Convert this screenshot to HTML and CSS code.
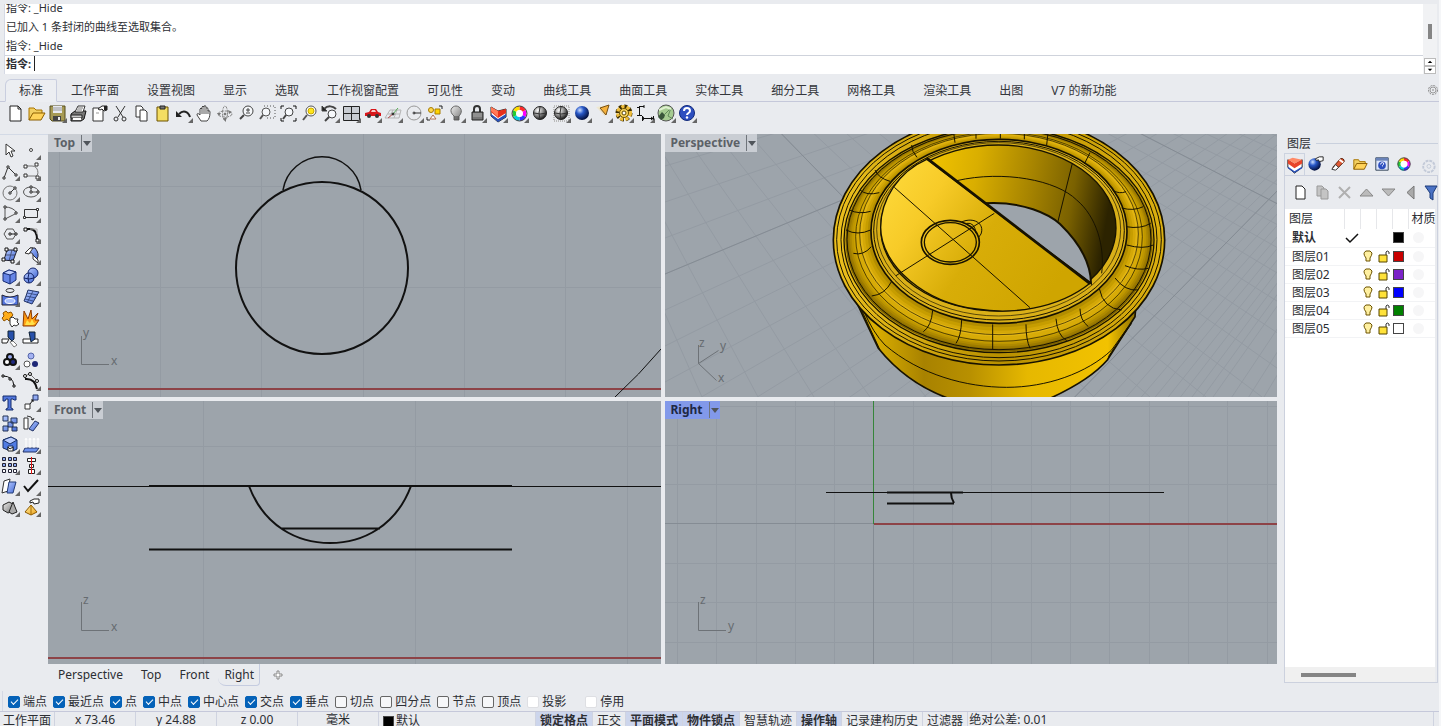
FILE: index.html
```html
<!DOCTYPE html>
<html lang="zh-CN">
<head>
  <meta charset="UTF-8">
  <title>Rhino</title>
  <link rel="stylesheet" href="styles.css">
</head>
<body>

<!-- shared gradients -->
<svg class="defs" aria-hidden="true">
  <defs>
    <radialGradient id="ball" cx=".35" cy=".3" r=".7"><stop offset="0" stop-color="#fff"/><stop offset=".5" stop-color="#999"/><stop offset="1" stop-color="#222"/></radialGradient>
    <radialGradient id="blueBall" cx=".35" cy=".3" r=".7"><stop offset="0" stop-color="#cfe0ff"/><stop offset=".4" stop-color="#2858c8"/><stop offset="1" stop-color="#04103f"/></radialGradient>
    <linearGradient id="blue" x2="1" y2="1"><stop offset="0" stop-color="#b4c9ff"/><stop offset="1" stop-color="#456bd6"/></linearGradient>
    <linearGradient id="gold" x2="1" y2="1"><stop offset="0" stop-color="#fff0a0"/><stop offset="1" stop-color="#eda01a"/></linearGradient>
    <linearGradient id="grey" x2="1" y2="1"><stop offset="0" stop-color="#eee"/><stop offset="1" stop-color="#777"/></linearGradient>
    <linearGradient id="body" x2="1"><stop offset="0" stop-color="#6d5500"/><stop offset=".08" stop-color="#dcb000"/><stop offset=".26" stop-color="#a88200"/><stop offset=".42" stop-color="#b89000"/><stop offset=".62" stop-color="#e6b800"/><stop offset=".9" stop-color="#f2c200"/><stop offset="1" stop-color="#8a6c00"/></linearGradient>
    <linearGradient id="plate" x2="1" y2=".5"><stop offset="0" stop-color="#ffdc3e"/><stop offset=".3" stop-color="#f7cb28"/><stop offset=".6" stop-color="#d8ad08"/><stop offset="1" stop-color="#cfa500"/></linearGradient>
    <linearGradient id="wall" x2="1" y2=".12"><stop offset=".2" stop-color="#f3c500"/><stop offset=".42" stop-color="#d9ae00"/><stop offset=".65" stop-color="#a88500"/><stop offset=".84" stop-color="#7a6100"/><stop offset="1" stop-color="#2c2300"/></linearGradient>
    <linearGradient id="rim" x2="1"><stop offset="0" stop-color="#ecc01e"/><stop offset=".5" stop-color="#b89000"/><stop offset="1" stop-color="#dcb010"/></linearGradient>
  </defs>
</svg>

<section class="command">
  <div class="command-main">
    <div class="history">
      <p>指令: _Hide</p>
      <p>已加入 1 条封闭的曲线至选取集合。</p>
      <p>指令: _Hide</p>
    </div>
    <div class="prompt">
      <label for="cmd">指令:</label>
      <input type="text" id="cmd">
    </div>
  </div>
  <div class="command-side">
    <span class="thumb"></span>
    <div class="spinner">
      <button aria-label="上"><svg viewBox="0 0 8 5"><path d="M1 4L4 1l3 3z"/></svg></button>
      <button aria-label="下"><svg viewBox="0 0 8 5"><path d="M1 1l3 3 3-3z"/></svg></button>
    </div>
  </div>
</section>

<nav class="tabs">
  <button class="tab active">标准</button>
  <button class="tab">工作平面</button>
  <button class="tab">设置视图</button>
  <button class="tab">显示</button>
  <button class="tab">选取</button>
  <button class="tab">工作视窗配置</button>
  <button class="tab">可见性</button>
  <button class="tab">变动</button>
  <button class="tab">曲线工具</button>
  <button class="tab">曲面工具</button>
  <button class="tab">实体工具</button>
  <button class="tab">细分工具</button>
  <button class="tab">网格工具</button>
  <button class="tab">渲染工具</button>
  <button class="tab">出图</button>
  <button class="tab">V7 的新功能</button>
  <button class="options" aria-label="选项"><svg viewBox="0 0 12 12"><circle cx="6" cy="6" r="4.5" fill="none" stroke="#888" stroke-dasharray="2 1"/><circle cx="6" cy="6" r="3" fill="none" stroke="#999"/><circle cx="6" cy="6" r="1" fill="#aaa"/></svg></button>
</nav>

<div class="toolbar">
  <button class="tool" aria-label="新建"><svg viewBox="0 0 21 21"><path d="M5 3h8l3 3v12H5z" fill="#fff" stroke="#222"/><path d="M13 3v3h3" fill="none" stroke="#222"/></svg></button>
  <button class="tool" aria-label="打开"><svg viewBox="0 0 21 21"><path d="M3 17V5h5l2 2h6v3" fill="#f2cf62" stroke="#a87400"/><path d="M3 17l4-7h12l-4 7z" fill="#ffd35a" stroke="#8c5e00"/></svg></button>
  <button class="tool fly" aria-label="保存"><svg viewBox="0 0 21 21"><path d="M3 3h15v15H5l-2-2z" fill="#a69a55" stroke="#554c1c"/><path d="M6 3h9v7H6z" fill="#e8eaf0"/><path d="M6 5h9M6 7h9" stroke="#999"/><path d="M6 13h8v5H6z" fill="#444"/><path d="M11 14h2v3h-2z" fill="#eee"/></svg></button>
  <button class="tool" aria-label="打印"><svg viewBox="0 0 21 21"><path d="M3 11l4-3h11l-2 8-3 2H3z" fill="#777" stroke="#111"/><path d="M7 9l3-6h7l-2 6z" fill="#fff" stroke="#333"/><path d="M10 5h5M9 7h5" stroke="#777"/><path d="M3 12h11v3H3z" fill="#ccc" stroke="#222"/><path d="M5 15h8v2H5z" fill="#fff"/></svg></button>
  <button class="tool" aria-label="文件属性"><svg viewBox="0 0 21 21"><path d="M4 5h10v13H4z" fill="#fff" stroke="#333"/><path d="M9 6l4-3 5 0v4l-3 1-2-2-2 1z" fill="#fff" stroke="#222"/><path d="M15 3h3v4h-3z" fill="#222"/><path d="M7 10h3" stroke="#999"/></svg></button>
  <button class="tool" aria-label="剪切"><svg viewBox="0 0 21 21" fill="none" stroke="#333"><path d="M6 3l7 11M15 3L8 14"/><circle cx="6" cy="16" r="2"/><circle cx="14" cy="16" r="2"/></svg></button>
  <button class="tool" aria-label="复制"><svg viewBox="0 0 21 21" fill="#fff" stroke="#333"><path d="M5 3h5l2 2v9H5z"/><path d="M9 7h5l2 2v9H9z"/></svg></button>
  <button class="tool" aria-label="粘贴"><svg viewBox="0 0 21 21"><path d="M5 4h11v14H5z" fill="#f4dd62" stroke="#6c5300"/><path d="M8 3h5v3H8z" fill="#777" stroke="#222"/></svg></button>
  <button class="tool fly" aria-label="撤销"><svg viewBox="0 0 21 21"><path d="M6 11c4-4 9-3 11 3" fill="none" stroke="#222" stroke-width="2"/><path d="M3 8v6h6z" fill="#222"/></svg></button>
  <button class="tool" aria-label="平移"><svg viewBox="0 0 21 21"><path d="M7 18l-4-6q0-3 3 0V6q1-2 2 0V4q1-2 2 0v-1q2-1 2 1v1q2-1 2 1v2q2-1 2 1c0 5-1 7-3 9z" fill="#fff" stroke="#444"/><path d="M8 6v5M10 4v7M12 5v6M14 7v4" stroke="#555"/></svg></button>
  <button class="tool" aria-label="旋转"><svg viewBox="0 0 21 21" fill="none" stroke="#888"><ellipse cx="10" cy="11" rx="7" ry="3" stroke-dasharray="3 1"/><ellipse cx="10" cy="10" rx="2.500" ry="7" stroke-dasharray="3 1"/><path d="M2 10h4l-2 3zM8 16l3 3v-5zM13 7l4 2-3 2z" fill="#777" stroke="none"/><circle cx="10" cy="11" r="1" fill="#222"/></svg></button>
  <button class="tool" aria-label="缩放"><svg viewBox="0 0 21 21" fill="none" stroke="#444"><circle cx="12" cy="8" r="5" fill="#f6f8fb"/><path d="M8 12l-4 4" stroke-width="2"/><path d="M10 7h4M12 5v4M10 10h4"/></svg></button>
  <button class="tool" aria-label="框选缩放"><svg viewBox="0 0 21 21" fill="none" stroke="#555"><path d="M7 3h11v12H9" stroke-dasharray="1 2"/><circle cx="9" cy="9" r="4" fill="#f6f8fb"/><path d="M6 12l-3 4" stroke-width="2"/></svg></button>
  <button class="tool" aria-label="缩放至最大"><svg viewBox="0 0 21 21" fill="none" stroke="#444"><circle cx="11" cy="9" r="4" fill="#f6f8fb"/><path d="M8 12l-3 4" stroke-width="2"/><path d="M3 6V3h3M15 3h3v3M18 15v3h-3M3 15v3h3" stroke="#111"/></svg></button>
  <button class="tool" aria-label="缩放选取"><svg viewBox="0 0 21 21" stroke="#555"><circle cx="12" cy="8" r="5" fill="#fff"/><circle cx="12" cy="8" r="3" fill="#ffe61a" stroke="#c9a800"/><path d="M8 12l-4 5" stroke-width="2"/></svg></button>
  <button class="tool fly" aria-label="恢复视图"><svg viewBox="0 0 21 21" fill="none" stroke="#444"><path d="M4 6c4-4 9-3 12 0" stroke-width="2"/><path d="M2 3v5h5z" fill="#222"/><circle cx="12" cy="11" r="4" fill="#f6f8fb"/><path d="M9 14l-4 4" stroke-width="2"/></svg></button>
  <button class="tool fly" aria-label="四个视窗"><svg viewBox="0 0 21 21"><path d="M2.500 3.500h16v14h-16z" fill="#c8ccd2" stroke="#222"/><path d="M10.500 3v15M3 10.500h15" stroke="#222"/></svg></button>
  <button class="tool fly" aria-label="右视图"><svg viewBox="0 0 21 21"><path d="M3 10l4-1 2-3h5l2 3 3 1v3H3z" fill="#d8161a"/><path d="M9 9l1-2h3l1 2z" fill="#f6c8c8"/><circle cx="7" cy="13" r="2" fill="#333"/><circle cx="15" cy="13" r="2" fill="#333"/></svg></button>
  <button class="tool fly" aria-label="工作平面"><svg viewBox="0 0 21 21" fill="none" stroke="#b5b5b5"><path d="M2 15l5-8h11l-2 8zM5 11h12M10 7l-4 8M14 7l-3 8"/><path d="M10 11l-5 4" stroke="#b55"/><path d="M10 11l5-6" stroke="#5a5"/><circle cx="10" cy="11" r="1" stroke="#111"/></svg></button>
  <button class="tool fly" aria-label="圆心"><svg viewBox="0 0 21 21" fill="none" stroke="#999"><circle cx="10" cy="10" r="7"/><path d="M10 10h7" stroke="#333"/><circle cx="10" cy="10" r="1" stroke="#333"/></svg></button>
  <button class="tool fly" aria-label="选取"><svg viewBox="0 0 21 21"><circle cx="6" cy="7" r="2.500" fill="#ffd84d" stroke="#a87c00"/><path d="M10 6h5v5h-5z" fill="#ffd400" stroke="#a87c00"/><path d="M5 16l3-4 3 4z" fill="#fff" stroke="#b07050"/><path d="M14 3h3v3M2 14v3h3" fill="none" stroke="#222"/></svg></button>
  <button class="tool fly" aria-label="隐藏"><svg viewBox="0 0 21 21"><path d="M8 13C2 8 6 3 10 3s8 5 3 10v4H8z" fill="url(#grey)" stroke="#666"/><path d="M8 14h5M8 16h5" stroke="#444"/></svg></button>
  <button class="tool fly" aria-label="锁定"><svg viewBox="0 0 21 21"><path d="M7 9V6q0-3 3-3t3 3v3" fill="none" stroke="#333" stroke-width="2"/><path d="M5 9h11v8H5z" fill="#777" stroke="#222"/><path d="M6 11h9M6 13h9" stroke="#aaa"/></svg></button>
  <button class="tool fly" aria-label="图层"><svg viewBox="0 0 21 21"><path d="M3 4l7 4 8-2v8l-8 5-7-6z" fill="#fff" stroke="#222"/><path d="M3 11l7 5 8-5v3l-8 5-7-6z" fill="#2850b8"/><path d="M3 4l7 4 8-2v4l-8 5-7-6z" fill="#e8301c"/><path d="M3 4l7 4v6L3 8z" fill="#ff7a58"/></svg></button>
  <button class="tool fly" aria-label="颜色"><svg viewBox="0 0 21 21" fill="none" stroke-width="4"><path d="M10.500 5A5.500 5.500 0 0 1 15 8" stroke="#ff2b2b"/><path d="M15 8a5.500 5.500 0 0 1 0 5" stroke="#f0f"/><path d="M15 13a5.500 5.500 0 0 1-4.500 3" stroke="#33f"/><path d="M10.500 16A5.500 5.500 0 0 1 6 13" stroke="#0cd"/><path d="M6 13a5.500 5.500 0 0 1 0-5" stroke="#2c3"/><path d="M6 8a5.500 5.500 0 0 1 4.500-3" stroke="#fd0"/><circle cx="10.500" cy="10.500" r="3.500" fill="#fff" stroke="none"/><circle cx="10.500" cy="10.500" r="7.500" stroke="#444" stroke-width="1"/></svg></button>
  <button class="tool" aria-label="着色"><svg viewBox="0 0 21 21"><circle cx="10" cy="10" r="6.500" fill="url(#ball)" stroke="#222"/><path d="M4 10q6 2 13 0M10 4q-2 6 0 13" fill="none" stroke="#333"/></svg></button>
  <button class="tool fly" aria-label="着色模式"><svg viewBox="0 0 21 21"><path d="M3 3h15v15H3z" fill="none" stroke="#bbb" stroke-width="2" stroke-dasharray="1 1"/><circle cx="10" cy="10" r="6.500" fill="url(#ball)" stroke="#222"/><path d="M4 10q6 2 13 0M10 4q-2 6 0 13" fill="none" stroke="#333"/></svg></button>
  <button class="tool fly" aria-label="渲染"><svg viewBox="0 0 21 21"><circle cx="10" cy="10" r="7" fill="url(#blueBall)"/></svg></button>
  <button class="tool fly" aria-label="灯光"><svg viewBox="0 0 21 21"><path d="M3 4l12-2-3 11z" fill="url(#gold)" opacity=".3"/><path d="M7 5l9-3-3 10z" fill="#f5b13c" stroke="#775014"/></svg></button>
  <button class="tool fly" aria-label="设置"><svg viewBox="0 0 21 21"><circle cx="10" cy="10" r="6.500" fill="none" stroke="#3d2e00" stroke-width="4" stroke-dasharray="3 2"/><circle cx="10" cy="10" r="6" fill="none" stroke="#efbd3a" stroke-width="4" stroke-dasharray="3 2"/><circle cx="10" cy="10" r="4.500" fill="#f8d35c" stroke="#6c5200"/><circle cx="10" cy="10" r="2" fill="#fff" stroke="#5b4600"/></svg></button>
  <button class="tool fly" aria-label="标注"><svg viewBox="0 0 21 21" fill="none" stroke="#111"><path d="M4.500 4v9M2 4.500h3M4 3.500h5M2 12.500h5M7 15.500h11M7.500 13v5M18.500 13v5"/><path d="M9 2v3M9 14l-2 1.500L9 17M16 14l2 1.500-2 1.500"/></svg></button>
  <button class="tool fly" aria-label="草蜢"><svg viewBox="0 0 21 21"><circle cx="10" cy="10" r="8" fill="#a5cb91" stroke="#555"/><path d="M2 14l4-5 3 3-1 3-3 2z" fill="#39563a"/><path d="M8 12l7-7-3 8 5 3" fill="none" stroke="#5f8a58"/><path d="M3 7l7-3 5 2" fill="none" stroke="#dff0d0" stroke-width="2"/></svg></button>
  <button class="tool fly" aria-label="说明"><svg viewBox="0 0 21 21"><circle cx="10" cy="10" r="7.500" fill="#2d4fc0" stroke="#122a7a"/><path d="M7 8c0-4 6-4 6 0 0 2-3 2-3 4" fill="none" stroke="#fff" stroke-width="2"/><circle cx="10" cy="14.500" r="1.200" fill="#fff"/></svg></button>
</div>

<main class="workspace">
  <aside class="tools">
    <button class="tool" aria-label="选取"><svg viewBox="0 0 21 21"><path d="M6 4v11l3-3 2 5 2-1-2-5h4z" fill="#fff" stroke="#333"/></svg></button>
    <button class="tool fly" aria-label="点"><svg viewBox="0 0 21 21"><circle cx="10" cy="10" r="1.500" fill="#fff" stroke="#444"/></svg></button>
    <button class="tool fly" aria-label="多重直线"><svg viewBox="0 0 21 21" fill="#fff" stroke="#333"><path d="M4 17L8 6l8 8" fill="none"/><path d="M3 16h2v2H3zM7 5h2v2H7zM15 13h2v2h-2z"/></svg></button>
    <button class="tool fly" aria-label="曲线"><svg viewBox="0 0 21 21" fill="#fff" stroke="#333"><path d="M5 5h6c7 0 7 10 4 10H5" fill="none" stroke="#777"/><path d="M3 4h3v3H3zM14 2h3v3h-3zM3 13h3v3H3zM15 15h3v3h-3z"/></svg></button>
    <button class="tool fly" aria-label="圆"><svg viewBox="0 0 21 21" fill="none" stroke="#777"><circle cx="10" cy="11" r="7"/><path d="M10 11l5-5" stroke="#333"/><path d="M9 10h2v2H9zM14 5h2v2h-2z" fill="#fff" stroke="#333"/></svg></button>
    <button class="tool fly" aria-label="椭圆"><svg viewBox="0 0 21 21" fill="none" stroke="#555"><ellipse cx="10" cy="10" rx="7.500" ry="5"/><path d="M10 10V5M10 10h7"/><path d="M9 9h2v2H9zM9 4h2v2H9zM16 9h2v2h-2z" fill="#fff" stroke="#333"/></svg></button>
    <button class="tool fly" aria-label="圆弧"><svg viewBox="0 0 21 21" fill="none" stroke="#555"><path d="M5 4q8 0 12 6M5 4v12l12-6"/><path d="M4 3h2v2H4zM4 15h2v2H4zM15 9h2v2h-2z" fill="#fff" stroke="#333"/></svg></button>
    <button class="tool fly" aria-label="矩形"><svg viewBox="0 0 21 21" fill="none" stroke="#333"><path d="M3.500 6.500h13v8h-13z"/><path d="M15.500 5.500h2v2h-2zM2.500 13.500h2v2h-2z" fill="#fff"/></svg></button>
    <button class="tool fly" aria-label="多边形"><svg viewBox="0 0 21 21" fill="none" stroke="#555"><path d="M4 10l3-5h6l3 5-3 5H7z"/><path d="M10 10h6" stroke="#222"/><path d="M9 9h2v2H9zM15 9h2v2h-2z" fill="#fff" stroke="#222"/></svg></button>
    <button class="tool fly" aria-label="圆角"><svg viewBox="0 0 21 21" fill="none" stroke="#111"><path d="M4 5h5q7 0 7 11" stroke-width="2"/><path d="M9 5h7v5" stroke="#aaa"/><path d="M3 4h3v3H3zM15 15h3v3h-3z" fill="#fff"/></svg></button>
    <button class="tool fly" aria-label="曲面"><svg viewBox="0 0 21 21"><path d="M7 5h10l-4 11-9-1z" fill="url(#blue)" stroke="#223"/><path d="M5 10h10M12 5l-3 11" stroke="#223" opacity=".6"/><path d="M5 3h3v3H5zM14 3h3v3h-3zM2 13h3v3H2zM11 15h3v3h-3z" fill="#fff" stroke="#111"/></svg></button>
    <button class="tool fly" aria-label="曲面圆角"><svg viewBox="0 0 21 21"><path d="M9 3h5q5 6 2 11l-4-4q0-3-6-2z" fill="url(#blue)" stroke="#223"/><path d="M9 3L4 8l4 1 4-6zM12 10l5 5v3l-5-4z" fill="#fff" stroke="#333"/></svg></button>
    <button class="tool fly" aria-label="立方体"><svg viewBox="0 0 21 21"><path d="M3 7l6-3 7 2v8l-6 4-7-3z" fill="#6685e6" stroke="#162c74"/><path d="M3 7l6-3 7 2-6 3z" fill="#c0d0ff" stroke="#162c74"/><path d="M10 9v9" stroke="#162c74"/></svg></button>
    <button class="tool fly" aria-label="布尔"><svg viewBox="0 0 21 21"><circle cx="12" cy="7" r="5" fill="url(#blue)" stroke="#112266"/><circle cx="8" cy="12" r="5" fill="url(#blue)" stroke="#112266"/><path d="M3 12q5 2 10 0M8 7q-2 5 0 10" fill="none" stroke="#112266"/></svg></button>
    <button class="tool fly" aria-label="抽离曲线"><svg viewBox="0 0 21 21"><ellipse cx="10" cy="3.500" rx="4" ry="2" fill="none" stroke="#333"/><path d="M2 8q8 4 16 0v10H2z" fill="#5476df" stroke="#223"/><ellipse cx="10" cy="14" rx="5" ry="2.500" fill="#a9c0ff" stroke="#fff"/></svg></button>
    <button class="tool fly" aria-label="网格"><svg viewBox="0 0 21 21"><path d="M7 3l11 2-3 5-4 7-8-3 2-5z" fill="url(#blue)" stroke="#223366"/><path d="M12 4l-6 12M5 9l10 2M4 12l8 2M6 6l11 2" fill="none" stroke="#223366" opacity=".7"/></svg></button>
    <button class="tool" aria-label="群组"><svg viewBox="0 0 21 21"><path d="M3 5l3-2 2 2 3-1 2 3-2 2 1 3-3 1-2-2-3 2-2-3 2-2z" fill="#ffad19" stroke="#915300"/><path d="M10 10l3-1 2 2 3 0-1 3 2 2-3 2-2-1-2 2-2-3z" fill="#fff" stroke="#333"/></svg></button>
    <button class="tool" aria-label="炸开"><svg viewBox="0 0 21 21"><path d="M2 18l1-15 4 8 3-9 1 9 6-6-3 7 4 0-4 6z" fill="#ff9c12" stroke="#8d3b00"/><path d="M4 17l2-5 3 3 2-4 2 4 3-1-4 3z" fill="#ffe14a"/></svg></button>
    <button class="tool" aria-label="修剪"><svg viewBox="0 0 21 21"><path d="M8 2h6v8l-2 2-4-4z" fill="#2750aa" stroke="#123"/><path d="M2 10h7l-2 4H2z" fill="#fff" stroke="#222"/><path d="M10 13l3-1 4 4-3 2z" fill="#fff" stroke="#777"/></svg></button>
    <button class="tool" aria-label="分割"><svg viewBox="0 0 21 21"><path d="M2 10h15v4H2z" fill="#fff" stroke="#222"/><path d="M8 3h6v7l-4 3z" fill="#2750aa" stroke="#123"/></svg></button>
    <button class="tool fly" aria-label="组合"><svg viewBox="0 0 21 21" stroke="#111" stroke-width="2"><circle cx="10" cy="7" r="3" fill="#98a8ee"/><circle cx="7" cy="12" r="3" fill="#fff"/><circle cx="13" cy="12" r="3" fill="#202a80"/></svg></button>
    <button class="tool" aria-label="解组"><svg viewBox="0 0 21 21"><circle cx="10" cy="6" r="3" fill="#a4b2f2" stroke="#5566aa"/><circle cx="6" cy="14" r="3" fill="#fff" stroke="#555"/><circle cx="14" cy="14" r="3" fill="#1d2776"/></svg></button>
    <button class="tool" aria-label="编辑点"><svg viewBox="0 0 21 21" fill="none" stroke="#111"><path d="M3 5q10 0 11 10"/><path d="M2 4h2v2H2zM9 7h2v2H9zM13 14h2v2h-2z" fill="#fff"/></svg></button>
    <button class="tool fly" aria-label="控制点"><svg viewBox="0 0 21 21" fill="none" stroke="#111"><path d="M4 8q10-1 12 10" stroke-width="2"/><path d="M3 5l6-2 8 8" stroke="#777"/><circle cx="4" cy="5" r="1.500" fill="#fff"/><circle cx="9" cy="3" r="1.500" fill="#fff"/><circle cx="16" cy="10" r="1.500" fill="#fff"/></svg></button>
    <button class="tool" aria-label="文字"><svg viewBox="0 0 21 21"><path d="M3 4h13v4h-2l-1-1h-2v9l2 1v1H6v-1l2-1V7H6L5 9H3z" fill="#5277dc" stroke="#152d6c"/></svg></button>
    <button class="tool fly" aria-label="移动"><svg viewBox="0 0 21 21"><path d="M12 3h5v5h-5z" fill="#91aaf2" stroke="#223366"/><path d="M4 12h5v5H4z" fill="#fff" stroke="#333"/><path d="M9 12l3-4M10 8h2v2" fill="none" stroke="#111"/></svg></button>
    <button class="tool" aria-label="阵列"><svg viewBox="0 0 21 21" fill="url(#blue)" stroke="#223355"><path d="M3 3h5v5H3zM11 5h6v5h-6zM8 9h5v5H8zM3 13h5v5H3zM12 14h5v4h-5z"/></svg></button>
    <button class="tool" aria-label="旋转"><svg viewBox="0 0 21 21"><path d="M3 5h4v11H3z" fill="#fff" stroke="#333"/><path d="M8 16l6-8 4 2-6 8z" fill="url(#blue)" stroke="#223366"/><path d="M6 3q5 0 6 4M12 7l-2-1M12 7l1-2" fill="none" stroke="#333"/></svg></button>
    <button class="tool fly" aria-label="实体编辑"><svg viewBox="0 0 21 21"><path d="M3 6l8-3 6 3v9l-4 2v-5H8v4l-5-2z" fill="#507be3" stroke="#173064"/><path d="M3 6l8-3 6 3-7 4z" fill="#b9ccff" stroke="#173064"/><path d="M8 13l2 2 3-2v4H8z" fill="#fff" stroke="#222"/></svg></button>
    <button class="tool fly" aria-label="投影"><svg viewBox="0 0 21 21"><path d="M4 14h14l-3 4H2z" fill="#6c91ed" stroke="#223366"/><path d="M5 5v9M9 5v9M13 5v9M17 5v9M4 6l1-2 1 2M8 6l1-2 1 2M12 6l1-2 1 2M16 6l1-2 1 2" stroke="#fff" fill="none"/></svg></button>
    <button class="tool fly" aria-label="矩形阵列"><svg viewBox="0 0 21 21" fill="#8ca9f2" stroke="#223"><path d="M2.500 2.500h3v3h-3zM8.500 2.500h3v3h-3zM13.500 2.500h3v3h-3zM2.500 8.500h3v3h-3zM8.500 8.500h3v3h-3zM13.500 8.500h3v3h-3z"/><path d="M2.500 14.500h3v3h-3zM8.500 14.500h3v3h-3zM13.500 14.500h3v3h-3z" fill="#fff"/></svg></button>
    <button class="tool fly" aria-label="对齐"><svg viewBox="0 0 21 21" fill="#fff" stroke="#222"><path d="M6.500 3.500h8v3h-8zM8.500 9.500h4v3h-4zM7.500 14.500h6v4h-6z"/><path d="M10.500 2v17" stroke="#e01010"/></svg></button>
    <button class="tool fly" aria-label="检查"><svg viewBox="0 0 21 21"><path d="M4 5l6-2-2 12-6 2z" fill="#fff" stroke="#333"/><path d="M9 6h7l-3 11H7z" fill="url(#blue)" stroke="#233c77"/></svg></button>
    <button class="tool fly" aria-label="完成"><svg viewBox="0 0 21 21"><path d="M3 10l4 5L17 4" fill="none" stroke="#111" stroke-width="2"/></svg></button>
    <button class="tool fly" aria-label="基础几何"><svg viewBox="0 0 21 21"><path d="M3 8l6-3 4 2v7l-5 2-5-3z" fill="url(#grey)" stroke="#222"/><path d="M13 5l4 10-5 2-3-2z" fill="#aaa" stroke="#222"/></svg></button>
    <button class="tool fly" aria-label="拖曳"><svg viewBox="0 0 21 21"><path d="M10 8l6 7-6 3-6-3z" fill="url(#gold)" stroke="#8a5800"/><path d="M10 8v10" stroke="#a66d00"/><path d="M9 4l4-2h5v4l-5 1-1-2-3 1z" fill="#fff" stroke="#222"/></svg></button>
  </aside>

  <div class="center">
    <div class="viewports">
      <section class="viewport">
        <button class="view-title"><span>Top</span></button>
        <svg class="scene" viewBox="0 0 613 263" preserveAspectRatio="xMinYMin slice">
          <path class="grid" d="M0 52.500h613M0 153.500h613M11.500 0v263M112.500 0v263M213.500 0v263M315.500 0v263M416.500 0v263M517.500 0v263"/>
          <path class="red" d="M0 255h613"/>
          <circle class="curve" cx="274" cy="134" r="86"/>
          <path class="curve bump" d="M235 56A39.500 39.500 0 0 1 313 56"/>
          <path class="curve thin" d="M567 263q24-22 46-48"/>
          <path class="axis" d="M33.500 202v28.500H61"/>
          <text x="35" y="203">y</text><text x="63" y="231">x</text>
        </svg>
      </section>

      <section class="viewport">
        <button class="view-title"><span>Perspective</span></button>
        <svg class="scene" viewBox="0 0 613 263" preserveAspectRatio="xMinYMin slice">
          <path class="grid" d="M-243-369L37 263M-243-369L93 263M-243-369L149 263M-243-369L205 263M-243-369L261 263M-243-369L317 263M-243-369L373 263M-243-369L429 263M-243-369L485 263M-243-369L541 263M-243-369L597 263M-243-369L653 263M-243-369L709 263M-243-369L765 263M-243-369L821 263M-243-369L877 263M-243-369L933 263M-243-369L989 263M-243-369L1045 263M-243-369L1101 263M-243-369L1157 263M-243-369L1213 263"/>
          <path class="grid" d="M900-236L0-4M900-236L0 32M900-236L0 68M900-236L0 104M900-236L0 140M900-236L0 176M900-236L0 212M900-236L0 248M900-236L0 284M900-236L0 320M900-236L0 356M900-236L0 392M900-236L0 428M900-236L0 464M900-236L0 500M900-236L0 536M900-236L0 572M900-236L0 608M900-236L0 644M900-236L0 680M900-236L0 716M900-236L0 752M900-236L0 788M900-236L0 824M900-236L0 860M900-236L0 896M900-236L0 932M900-236L0 968M900-236L0 1004M900-236L0 1040M900-236L0 1112M900-236L0 1184M900-236L0 1256"/>
          <path class="grid major" d="M-243-369L373 263M-243-369L989 263M900-236L0 140M900-236L0 680"/>
          <!-- ring model, drawn at three times its size -->
          <g transform="translate(145 -4) scale(.333333)" fill="none" stroke="#171200" stroke-width="3">
            <path d="M118 470L160 560L205 655Q290 760 415 805H720Q840 750 892 690L975 560L980 500z" fill="url(#body)" stroke-width="5"/>
            <path d="M160 540Q190 610 225 645C330 735 470 772 590 772S830 730 905 660L955 590M150 530l60 130M965 580l-70 100"/>
            <ellipse cx="567" cy="330" rx="497" ry="375" fill="url(#rim)" stroke-width="5"/>
            <ellipse cx="567" cy="329" rx="487" ry="364"/>
            <ellipse cx="567" cy="329" rx="474" ry="354" fill="url(#rim)"/>
            <g stroke="none">
              <ellipse cx="567" cy="330" rx="461" ry="335" fill="#7c6100"/>
              <ellipse cx="567" cy="328" rx="457" ry="332" fill="#8c6e00"/>
              <ellipse cx="567" cy="327" rx="452" ry="328" fill="#9d7b00"/>
              <ellipse cx="567" cy="325" rx="447" ry="324" fill="#ae8900"/>
              <ellipse cx="567" cy="323" rx="442" ry="320" fill="#bd9600"/>
              <ellipse cx="567" cy="322" rx="436" ry="316" fill="#caa000"/>
              <ellipse cx="567" cy="320" rx="430" ry="311" fill="#d7ab08"/>
              <ellipse cx="567" cy="316" rx="419" ry="303" fill="#e2b512"/>
              <ellipse cx="567" cy="313" rx="410" ry="297" fill="#d4a808"/>
              <ellipse cx="567" cy="311" rx="402" ry="291" fill="#c69d00"/>
              <ellipse cx="567" cy="308" rx="394" ry="284" fill="#b38d00"/>
            </g>
            <ellipse cx="567" cy="330" rx="465" ry="338" stroke-width="4"/>
            <ellipse cx="567" cy="328" rx="456" ry="331"/>
            <ellipse cx="567" cy="320" rx="430" ry="314" stroke-width="2"/>
            <ellipse cx="567" cy="312" rx="418" ry="302" stroke-width="2"/>
            <ellipse cx="567" cy="304" rx="384" ry="276" fill="#d9af18" stroke-width="5"/>
            <ellipse cx="567" cy="302" rx="376" ry="268"/>
            <ellipse cx="566" cy="298" rx="366" ry="260" fill="#dab018" stroke-width="2"/>
            <ellipse cx="565" cy="294" rx="353" ry="249" fill="url(#wall)" stroke-width="4"/>
            <path d="M440 152C580 120 740 150 800 210C860 260 885 350 875 430M787 100L743 278"/>
            <path d="M522 220C640 212 720 255 750 282C810 340 842 400 843 460z" fill="#9da4ab" stroke-width="6"/>
            <path d="M350 88L840 460C740 540 600 553 500 537C350 520 212 410 212 292C212 210 265 125 350 88z" fill="url(#plate)" stroke-width="4"/>
            <path d="M350 84L840 461" stroke-width="8"/>
            <path d="M253 172L660 533M258 437L553 250"/>
            <ellipse cx="421" cy="337" rx="87" ry="66" stroke-width="5"/>
            <ellipse cx="421" cy="337" rx="78" ry="59" stroke-width="4"/>
            <path d="M455 276C490 260 525 280 513 312L506 322M470 280q24-4 28 30"/>
            <path d="M108 300q35 18 74 0M118 240q30 14 64 4M150 180q20 18 58 8M195 120q10 24 45 34M305 45q0 20 16 37M430 0l5 38M498 0v26M571 0v26M643 0v28M715 0l-5 45M840 68l-17 34M948 185q-20 8-40-4M1000 230q-30 14-65 4M1022 280q-30 18-74 10M1030 345q-30 14-80 0M1015 415q-30 8-70-8M985 480q-40 4-70-36M935 540q-55-4-67-64M835 590q-25-20-25-54M770 632q-28-16-32-66M660 655q-12-26-12-72M548 658v-75M438 640q15-20 17-70M340 605q24-16 28-64M185 498q40-4 60-44M130 370q30 8 54-20"/>
          </g>
          <path class="axis" d="M33.500 211v18.500l20-13M33.500 229.500l18 17"/>
          <text x="34" y="213">z</text><text x="55" y="216">y</text><text x="53" y="248">x</text>
        </svg>
      </section>

      <section class="viewport">
        <button class="view-title"><span>Front</span></button>
        <svg class="scene" viewBox="0 0 613 263" preserveAspectRatio="xMinYMin slice">
          <path class="grid" d="M0 45.500h613M155.500 0v263M367.500 0v263M579.500 0v263"/>
          <path class="red" d="M0 257h613"/>
          <path class="curve thin" d="M0 85.500h613"/>
          <path class="curve" d="M101 85h363M101 148.500h363M233 127.500h99M201 85C216 125 249 142 282 142S348 125 363 85"/>
          <path class="axis" d="M33.500 201v28.500H61"/>
          <text x="35" y="203">z</text><text x="63" y="230">x</text>
        </svg>
      </section>

      <section class="viewport active">
        <button class="view-title"><span>Right</span></button>
        <svg class="scene" viewBox="0 0 613 263" preserveAspectRatio="xMinYMin slice">
          <path class="grid" d="M0 5.500h613M0 44.500h613M0 83.500h613M0 162.500h613M0 201.500h613M0 241.500h613M12.500 0v263M51.500 0v263M91.500 0v263M130.500 0v263M169.500 0v263M248.500 0v263M287.500 0v263M326.500 0v263M366.500 0v263M405.500 0v263M444.500 0v263M484.500 0v263M523.500 0v263M562.500 0v263M602.500 0v263"/>
          <path class="grid major" d="M208.500 123v140M0 122.500h209"/>
          <path class="green" d="M208.500 0v123"/>
          <path class="red" d="M209 123h404"/>
          <path class="curve thin" d="M161 91.500h338"/>
          <path class="curve" d="M222 91.500h76M222 102.500h67M286 92q0 5 3 10"/>
          <path class="axis" d="M33.500 201v28.500H61"/>
          <text x="35" y="203">z</text><text x="63" y="229">y</text>
        </svg>
      </section>
    </div>

    <nav class="view-tabs">
      <button>Perspective</button>
      <button>Top</button>
      <button>Front</button>
      <button class="active">Right</button>
      <button class="add" aria-label="新增"><svg viewBox="0 0 10 10"><path d="M4 1h2v3h3v2H6v3H4V6H1V4h3z" fill="#fff" stroke="#888"/></svg></button>
    </nav>
  </div>

  <aside class="panel">
    <h2>图层</h2>
    <div class="panel-tabs">
      <button class="active" aria-label="图层"><svg viewBox="0 0 21 21"><path d="M3 5l7 5 8-5v8l-8 6-7-6z" fill="#fff" stroke="#222"/><path d="M3 12l7 5 8-5v2l-8 5-7-5z" fill="#2850b8"/><path d="M3 5l7 4 8-4v4l-8 5-7-5z" fill="#e8442a"/><path d="M3 5l5-2 10 2-8 4z" fill="#ff8a68"/></svg></button>
      <button aria-label="渲染"><svg viewBox="0 0 21 21"><circle cx="9" cy="11" r="6.500" fill="url(#blueBall)"/><path d="M10 5l4-2h4v4l-4 1-1-2-2 1z" fill="#fff" stroke="#222"/></svg></button>
      <button aria-label="材质"><svg viewBox="0 0 21 21"><path d="M5 14l8-9q4-1 4 3l-8 8z" fill="#e05a36" stroke="#541800"/><path d="M8 11l3 3-3 3-4-1z" fill="#fff" stroke="#333"/><path d="M12 6l4 3" stroke="#fff" stroke-width="2"/></svg></button>
      <button aria-label="图库"><svg viewBox="0 0 21 21"><path d="M4 16V6h5l1 2h6v3" fill="#f2cf62" stroke="#a87400"/><path d="M4 16l3-6h11l-3 6z" fill="#ffd35a" stroke="#8c5e00"/></svg></button>
      <button aria-label="说明"><svg viewBox="0 0 21 21"><path d="M4 4h13v13H4z" fill="#dce5fb" stroke="#345"/><path d="M4 4h13v3H4z" fill="#6a83b8"/><circle cx="10.500" cy="12" r="4" fill="#2d4fc0"/><path d="M9 11q0-2 2-2t1 2l-1 1v1" fill="none" stroke="#fff"/></svg></button>
      <button aria-label="颜色"><svg viewBox="0 0 21 21" fill="none" stroke-width="3"><path d="M10.500 5.500A5 5 0 0 1 15 8" stroke="#ff2b2b"/><path d="M15 8a5 5 0 0 1 0 5" stroke="#f0f"/><path d="M15 13a5 5 0 0 1-4.500 3" stroke="#33f"/><path d="M10.500 16A5 5 0 0 1 6 13" stroke="#0cd"/><path d="M6 13a5 5 0 0 1 0-5" stroke="#2c3"/><path d="M6 8a5 5 0 0 1 4.500-2.500" stroke="#fd0"/><circle cx="10.500" cy="10.500" r="3.500" fill="#fff" stroke="none"/><circle cx="10.500" cy="10.500" r="6.500" stroke="#444" stroke-width="1"/></svg></button>
      <button class="gear" aria-label="选项"><svg viewBox="0 0 21 21" fill="none" stroke="#c3cad8"><circle cx="12.500" cy="13" r="6" stroke-width="2" stroke-dasharray="3 1"/><circle cx="12.500" cy="13" r="2"/></svg></button>
    </div>
    <div class="panel-box">
      <div class="panel-tools">
        <button aria-label="新图层"><svg viewBox="0 0 21 21"><path d="M6 4h6l3 3v10H6z" fill="#fff" stroke="#222"/></svg></button>
        <button aria-label="复制图层"><svg viewBox="0 0 21 21" fill="#c4c4c4" stroke="#999"><path d="M5 4h5l2 2v8H5z"/><path d="M9 7h5l2 2v8H9z"/></svg></button>
        <button aria-label="删除"><svg viewBox="0 0 21 21"><path d="M5 5l11 11M16 5L5 16" stroke="#b0b0b0" stroke-width="2"/></svg></button>
        <button aria-label="上移"><svg viewBox="0 0 21 21"><path d="M4 14l6.500-7 6.500 7z" fill="#bbb" stroke="#888"/></svg></button>
        <button aria-label="下移"><svg viewBox="0 0 21 21"><path d="M4 7l6.500 7L17 7z" fill="#bbb" stroke="#888"/></svg></button>
        <button aria-label="左移"><svg viewBox="0 0 21 21"><path d="M14 4v13l-7-6.500z" fill="#aaa" stroke="#777"/></svg></button>
        <button aria-label="过滤"><svg viewBox="0 0 21 21"><path d="M3 4h12l-4 7v7l-3-2v-5z" fill="#4a72c4" stroke="#1d3b7a"/></svg></button>
      </div>
      <table class="layers">
        <thead>
          <tr><th class="name">图层</th><th></th><th></th><th></th><th></th><th class="mat">材质</th></tr>
        </thead>
        <tbody>
          <tr class="current"><td>默认</td><td><svg viewBox="0 0 14 14"><path d="M1 7l4 4 8-8" fill="none" stroke="#111" stroke-width="1.500"/></svg></td><td></td><td></td><td><i class="swatch black"></i></td><td><i class="dot"></i></td></tr>
          <tr><td>图层01</td><td></td><td><svg viewBox="0 0 14 14"><path d="M5 9Q1 4 5 2q5-1 6 2 0 2-2 5v3H5z" fill="#fff0a0" stroke="#6c5300"/></svg></td><td><svg viewBox="0 0 14 14"><path d="M9 6V3q1-2 3 0v2" fill="none" stroke="#333"/><path d="M2 6h8v7H2z" fill="#ffe23a" stroke="#554400"/></svg></td><td><i class="swatch crimson"></i></td><td><i class="dot"></i></td></tr>
          <tr><td>图层02</td><td></td><td><svg viewBox="0 0 14 14"><path d="M5 9Q1 4 5 2q5-1 6 2 0 2-2 5v3H5z" fill="#fff0a0" stroke="#6c5300"/></svg></td><td><svg viewBox="0 0 14 14"><path d="M9 6V3q1-2 3 0v2" fill="none" stroke="#333"/><path d="M2 6h8v7H2z" fill="#ffe23a" stroke="#554400"/></svg></td><td><i class="swatch purple"></i></td><td><i class="dot"></i></td></tr>
          <tr><td>图层03</td><td></td><td><svg viewBox="0 0 14 14"><path d="M5 9Q1 4 5 2q5-1 6 2 0 2-2 5v3H5z" fill="#fff0a0" stroke="#6c5300"/></svg></td><td><svg viewBox="0 0 14 14"><path d="M9 6V3q1-2 3 0v2" fill="none" stroke="#333"/><path d="M2 6h8v7H2z" fill="#ffe23a" stroke="#554400"/></svg></td><td><i class="swatch blue"></i></td><td><i class="dot"></i></td></tr>
          <tr><td>图层04</td><td></td><td><svg viewBox="0 0 14 14"><path d="M5 9Q1 4 5 2q5-1 6 2 0 2-2 5v3H5z" fill="#fff0a0" stroke="#6c5300"/></svg></td><td><svg viewBox="0 0 14 14"><path d="M9 6V3q1-2 3 0v2" fill="none" stroke="#333"/><path d="M2 6h8v7H2z" fill="#ffe23a" stroke="#554400"/></svg></td><td><i class="swatch forest"></i></td><td><i class="dot"></i></td></tr>
          <tr><td>图层05</td><td></td><td><svg viewBox="0 0 14 14"><path d="M5 9Q1 4 5 2q5-1 6 2 0 2-2 5v3H5z" fill="#fff0a0" stroke="#6c5300"/></svg></td><td><svg viewBox="0 0 14 14"><path d="M9 6V3q1-2 3 0v2" fill="none" stroke="#333"/><path d="M2 6h8v7H2z" fill="#ffe23a" stroke="#554400"/></svg></td><td><i class="swatch white"></i></td><td><i class="dot"></i></td></tr>
        </tbody>
      </table>
      <div class="list-space"></div>
      <div class="hscroll"><span></span></div>
    </div>
  </aside>
</main>

<form class="osnap">
  <label><input type="checkbox" checked>端点</label>
  <label><input type="checkbox" checked>最近点</label>
  <label><input type="checkbox" checked>点</label>
  <label><input type="checkbox" checked>中点</label>
  <label><input type="checkbox" checked>中心点</label>
  <label><input type="checkbox" checked>交点</label>
  <label><input type="checkbox" checked>垂点</label>
  <label><input type="checkbox">切点</label>
  <label><input type="checkbox">四分点</label>
  <label><input type="checkbox">节点</label>
  <label><input type="checkbox">顶点</label>
  <label class="soft"><input type="checkbox">投影</label>
  <label class="soft"><input type="checkbox">停用</label>
</form>

<footer class="status">
  <button class="plane">工作平面</button>
  <span class="coord">x 73.46</span>
  <span class="coord">y 24.88</span>
  <span class="coord">z 0.00</span>
  <span class="coord">毫米</span>
  <button class="layer"><i class="swatch black"></i>默认</button>
  <button class="on">锁定格点</button>
  <button>正交</button>
  <button class="on">平面模式</button>
  <button class="on">物件锁点</button>
  <button>智慧轨迹</button>
  <button class="on">操作轴</button>
  <button>记录建构历史</button>
  <button>过滤器</button>
  <span class="tolerance">绝对公差: 0.01</span>
</footer>

</body>
</html>
```

FILE: styles.css
```css
* {
  box-sizing: border-box;
}
body {
  margin: 0;
  height: 100vh;
  overflow: hidden;
  display: flex;
  flex-direction: column;
  background: #e9ebef;
  border-right: 2px solid #f5f6f8;
  color: #2c2e33;
  font-family: "Noto Sans", "Noto Sans CJK SC", sans-serif;
  font-size: 12px;
  line-height: 18px;
}
button {
  margin: 0;
  padding: 0;
  border: none;
  background: none;
  color: inherit;
  font: inherit;
  white-space: nowrap;
}
button svg {
  display: block;
}
.defs {
  position: absolute;
  width: 0;
  height: 0;
}

/* command line */
.command {
  display: flex;
  flex: none;
  height: 70px;
  margin: 4px 2px 5px 4px;
  border-left: 1px solid #d5d9e4;
  font-size: 11px;
  line-height: 19px;
}
.command-main {
  flex: 1;
  background: #fff;
}
.history {
  display: flex;
  flex-direction: column;
  justify-content: flex-end;
  height: 51px;
  overflow: hidden;
  padding-left: 1px;
}
.history p {
  flex: none;
  margin: 0;
}
.prompt {
  display: flex;
  height: 19px;
  padding-left: 1px;
  border-top: 1px solid #cfd3dc;
  line-height: 15px;
}
.prompt label {
  font-weight: bold;
}
.prompt input {
  flex: 1;
  height: 15px;
  margin: 0 0 0 3px;
  border: none;
  border-left: 1px solid #222;
  outline: none;
}
.command-side {
  display: flex;
  flex-direction: column;
  justify-content: space-between;
  align-items: center;
  width: 14px;
  background: #f1f2f4;
}
.thumb {
  width: 4px;
  height: 15px;
  margin-top: 20px;
  background: #858585;
}
.spinner button {
  display: block;
  width: 12px;
  height: 8px;
  padding: 1px 2px;
  background: #fff;
  border: 1px solid #bbb;
}

/* toolbar tabs */
.tabs {
  display: flex;
  flex: none;
  height: 23px;
  padding-left: 5px;
  border-bottom: 1px solid #c5c8da;
}
.tab {
  padding: 2px 14px 0;
  color: #34363b;
}
.tab.active {
  height: 23px;
  background: #eceef2;
  border: 1px solid #c9cedf;
  border-bottom-color: #eceef2;
  border-radius: 6px 2px 0 0;
  padding: 1px 13px 0;
}
.options {
  width: 12px;
  margin-left: auto;
}

.toolbar {
  display: flex;
  flex: none;
  height: 32px;
  padding: 1px 0 0 5px;
}
.tool {
  position: relative;
  width: 21px;
  height: 21px;
}
.tool svg {
  width: 21px;
  height: 21px;
}
.fly::after {
  content: "";
  position: absolute;
  right: 1px;
  bottom: 1px;
  border-left: 5px solid transparent;
  border-bottom: 5px solid #666;
}

.workspace {
  display: flex;
  flex: 1;
  min-height: 0;
}
.tools {
  display: grid;
  grid-template-columns: 21px 21px;
  grid-auto-rows: 21px;
  flex: none;
  align-content: start;
  width: 48px;
  padding-top: 5px;
  border-top: 1px solid #d3dae6;
}
.center {
  display: flex;
  flex: 1;
  flex-direction: column;
  min-width: 0;
}

/* viewports */
.viewports {
  display: grid;
  grid-template: 1fr 1fr / 1fr 1fr;
  gap: 4px;
  flex: 1;
  min-height: 0;
}
.viewport {
  position: relative;
  overflow: hidden;
  background: #9da4ab;
}
.scene {
  display: block;
  width: 100%;
  height: 100%;
}
.view-title {
  position: absolute;
  left: 0;
  top: 0;
  display: flex;
  align-items: center;
  height: 18px;
  padding-left: 6px;
  background: #c9cdd3;
  color: #5c6167;
  font-weight: bold;
}
.view-title::after {
  content: "";
  width: 0;
  margin: 0 1px;
  border: 4px solid transparent;
  border-top: 5px solid #50555b;
  border-bottom: none;
}
.view-title span {
  padding-right: 6px;
  line-height: 16px;
  border-right: 1px solid #70757b;
}
.active .view-title {
  background: #8299ea;
  color: #1e2845;
}
.scene text {
  fill: #666b70;
  font-size: 12px;
}
.grid, .red, .green, .curve, .axis {
  fill: none;
}
.grid {
  stroke: #949ba3;
}
.grid.major {
  stroke: #858c94;
}
.red {
  stroke: #8d4347;
  stroke-width: 2;
}
.green {
  stroke: #36853a;
}
.curve {
  stroke: #111;
  stroke-width: 2;
}
.curve.thin {
  stroke-width: 1;
}
.curve.bump {
  stroke-width: 1.5;
}
.axis {
  stroke: #6d7277;
}

.view-tabs {
  display: flex;
  flex: none;
  height: 27px;
  padding-left: 1px;
  line-height: 20px;
}
.view-tabs button {
  height: 22px;
  padding: 0 9px;
}
.view-tabs .active {
  border-right: 1px solid #c5cce0;
  border-bottom: 1px solid #c5cce0;
  border-radius: 0 0 4px 8px;
  padding: 0 5px 0 6px;
}
.view-tabs .add {
  width: 36px;
  padding: 0 13px;
}

/* layer panel */
.panel {
  display: flex;
  flex: none;
  flex-direction: column;
  width: 162px;
  padding: 0 1px 8px 7px;
}
.panel h2 {
  display: flex;
  align-items: center;
  height: 19px;
  margin: 0 0 0 3px;
  font-size: 12px;
  font-weight: normal;
}
.panel h2::after {
  content: "";
  flex: 1;
  height: 1px;
  margin-left: 5px;
  background: #c9d0dd;
}
.panel-tabs {
  display: flex;
}
.panel-tabs button {
  flex: none;
  width: 22px;
  height: 22px;
  border: 1px solid transparent;
}
.panel-tabs .active {
  width: 21px;
  border-color: #ccd3e0;
  border-bottom: none;
}
.panel-tabs svg {
  width: 20px;
  height: 20px;
}
.panel-tabs .gear {
  margin-left: auto;
}
.panel-box {
  display: flex;
  flex: 1;
  flex-direction: column;
  padding-right: 2px;
  border: 1px solid #ccd1de;
}
.panel-tools {
  display: flex;
  height: 33px;
  padding: 6px 0 0 5px;
}
.panel-tools button {
  flex: none;
  width: 22px;
  height: 21px;
}
.panel-tools svg {
  width: 21px;
  height: 21px;
}
.layers {
  width: 100%;
  table-layout: fixed;
  border-collapse: collapse;
  background: #fff;
}
.layers th {
  width: 16px;
  height: 20px;
  padding: 0;
  border-right: 1px solid #e6e7ea;
  font-weight: normal;
  text-align: left;
}
.layers .name {
  width: 59px;
  padding-left: 4px;
}
.layers .mat {
  width: auto;
  padding-left: 3px;
  border-right: none;
  white-space: nowrap;
}
.layers td {
  height: 18px;
  padding: 0 1px;
  border-bottom: 1px solid #f2f3f5;
  line-height: 17px;
}
.layers td:first-child {
  padding-left: 7px;
}
.layers .current td {
  font-weight: bold;
}
.layers svg {
  display: block;
  width: 14px;
  height: 14px;
}
.swatch {
  display: block;
  flex: none;
  width: 11px;
  height: 11px;
  border: 1px solid #444;
}
.black { background: #000; }
.crimson { background: #c80000; }
.purple { background: #7b22c8; }
.blue { background: #00f; }
.forest { background: #008000; }
.white { background: #fff; }
.dot {
  display: block;
  width: 11px;
  height: 11px;
  margin-left: 4px;
  border-radius: 50%;
  background: #f6f6f7;
}
.list-space {
  flex: 1;
  background: #fff;
}
.hscroll {
  height: 15px;
  padding: 6px 0 0 16px;
  background: #f0f0f0;
}
.hscroll span {
  display: block;
  width: 55px;
  height: 4px;
  background: #858585;
}

/* object snaps */
.osnap {
  display: flex;
  flex: none;
  height: 20px;
  margin: 0 0 0 2px;
  padding: 2px 0 0 5px;
  border-left: 1px solid #d5d9e4;
}
.osnap label {
  display: flex;
  align-items: center;
  margin-right: 6px;
  white-space: nowrap;
}
.osnap input {
  appearance: none;
  width: 12px;
  height: 12px;
  margin: 0 3px 0 0;
  border: 1px solid #666;
  border-radius: 2px;
  background: #f6f7f9;
}
.osnap input:checked {
  display: grid;
  place-items: center;
  background: #0562b8;
  border-color: #0562b8;
}
.osnap input:checked::after {
  content: "";
  width: 6px;
  height: 3px;
  margin-bottom: 2px;
  border-left: 1px solid #fff;
  border-bottom: 1px solid #fff;
  transform: rotate(-45deg);
}
.osnap .soft {
  margin-right: 19px;
}
.osnap .soft input {
  border-color: #dedfe3;
  background: #fff;
}

/* status bar */
.status {
  display: flex;
  flex: none;
  height: 15px;
  border-top: 1px solid #c5c8da;
}
.status > * {
  flex: none;
  height: 18px;
  padding: 0 4px;
  border-right: 1px solid #cfd3e0;
  line-height: 16px;
}
.status .plane {
  width: 55px;
  padding: 0 2px;
}
.status .coord {
  width: 81px;
  text-align: center;
}
.status .layer {
  display: flex;
  align-items: center;
  gap: 2px;
  width: 157px;
}
.status .on {
  background: #ccd5ec;
  font-weight: bold;
}
.status .tolerance {
  flex: 1;
  margin-right: 5px;
  padding: 0 1px;
}
```
